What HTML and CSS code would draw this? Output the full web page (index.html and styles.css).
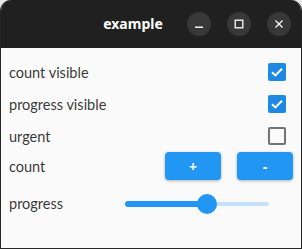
FILE: index.html
```html
<!DOCTYPE html>
<html lang="en">
<head>
<meta charset="utf-8">
<title>example</title>
<link rel="stylesheet" href="styles.css">
</head>
<body>
<div class="window">
	<div class="titlebar">
		<div class="title">example</div>
		<div class="controls">
			<div class="ctl">
				<svg width="10" height="10" viewBox="0 0 10 10"><rect x="1" y="7.5" width="8" height="1.4" fill="#fff"/></svg>
			</div>
			<div class="ctl">
				<svg width="10" height="10" viewBox="0 0 10 10"><rect x="1.2" y="1.2" width="7.6" height="7.6" fill="none" stroke="#fff" stroke-width="1.3"/></svg>
			</div>
			<div class="ctl">
				<svg width="10" height="10" viewBox="0 0 10 10"><path d="M1.5 1.5 L8.5 8.5 M8.5 1.5 L1.5 8.5" stroke="#fff" stroke-width="1.3"/></svg>
			</div>
		</div>
	</div>

	<div class="content">
		<div class="row">
			<span class="label">count visible</span>
			<div class="check on">
				<svg width="18" height="18" viewBox="0 0 18 18"><path d="M4 9.2 L7.4 12.4 L14 5.8" fill="none" stroke="#fff" stroke-width="2"/></svg>
			</div>
		</div>
		<div class="row">
			<span class="label">progress visible</span>
			<div class="check on">
				<svg width="18" height="18" viewBox="0 0 18 18"><path d="M4 9.2 L7.4 12.4 L14 5.8" fill="none" stroke="#fff" stroke-width="2"/></svg>
			</div>
		</div>
		<div class="row">
			<span class="label">urgent</span>
			<div class="check"></div>
		</div>
		<div class="row row-count">
			<span class="label">count</span>
			<div class="btns">
				<div class="btn">+</div>
				<div class="btn">-</div>
			</div>
		</div>
		<div class="row row-progress">
			<span class="label">progress</span>
			<div class="slider">
				<div class="track"></div>
				<div class="active" style="width: 57%"></div>
				<div class="thumb" style="left: 57%"></div>
			</div>
		</div>
	</div>
</div>
</body>
</html>
```

FILE: styles.css
```css
html, body {
	margin: 0;
	padding: 0;
}
body {
	background-color: #e8e8e8;
	font-family: "Noto Sans", "DejaVu Sans", sans-serif;
}
.window {
	width: 302px;
	height: 249px;
	box-sizing: border-box;
	border: 1px solid #262626;
	border-top: none;
	border-radius: 11px 11px 0 0;
	overflow: hidden;
	background-color: #fafafa;
}
.titlebar {
	height: 48px;
	background-color: #202020;
	display: flex;
	align-items: center;
	padding: 0 10px 0 78px;
}
.title {
	flex: 1;
	text-align: center;
	color: #fff;
	font-weight: bold;
	font-size: 14px;
	padding-bottom: 1px;
}
.controls {
	display: flex;
	gap: 16px;
}
.ctl {
	width: 24px;
	height: 24px;
	border-radius: 50%;
	background-color: #383838;
	display: flex;
	align-items: center;
	justify-content: center;
}
.ctl svg {
	display: block;
}
.content {
	padding: 8px 0 0 8px;
}
.row {
	height: 32px;
	display: flex;
	align-items: center;
	justify-content: space-between;
}
.label {
	font-family: Lato, "Noto Sans", sans-serif;
	font-size: 14.5px;
	color: rgba(0,0,0,0.8);
}
.check {
	width: 18px;
	height: 18px;
	box-sizing: border-box;
	border: 2px solid #737373;
	border-radius: 2px;
	margin-right: 15px;
}
.check.on {
	border: none;
	background-color: #1e88e5;
}
.check svg {
	display: block;
}
.row-count {
	height: 28px;
}
.btns {
	display: flex;
	gap: 16px;
	margin-right: 8px;
}
.btn {
	width: 56px;
	height: 28px;
	border-radius: 4px;
	background-color: #2196f3;
	color: #fff;
	font-weight: bold;
	font-size: 14px;
	display: flex;
	align-items: center;
	justify-content: center;
	box-shadow: 0 1px 3px rgba(0,0,0,0.3);
}
.row-progress {
	height: 47px;
}
.slider {
	position: relative;
	width: 144px;
	height: 20px;
	margin-right: 32px;
}
.track {
	position: absolute;
	left: 0;
	right: 0;
	top: 8px;
	height: 4px;
	border-radius: 2px;
	background-color: #c6e2f8;
}
.active {
	position: absolute;
	left: 0;
	top: 7px;
	height: 6px;
	border-radius: 3px;
	background-color: #2196f3;
}
.thumb {
	position: absolute;
	top: 0;
	width: 20px;
	height: 20px;
	margin-left: -10px;
	border-radius: 50%;
	background-color: #2196f3;
}
```
